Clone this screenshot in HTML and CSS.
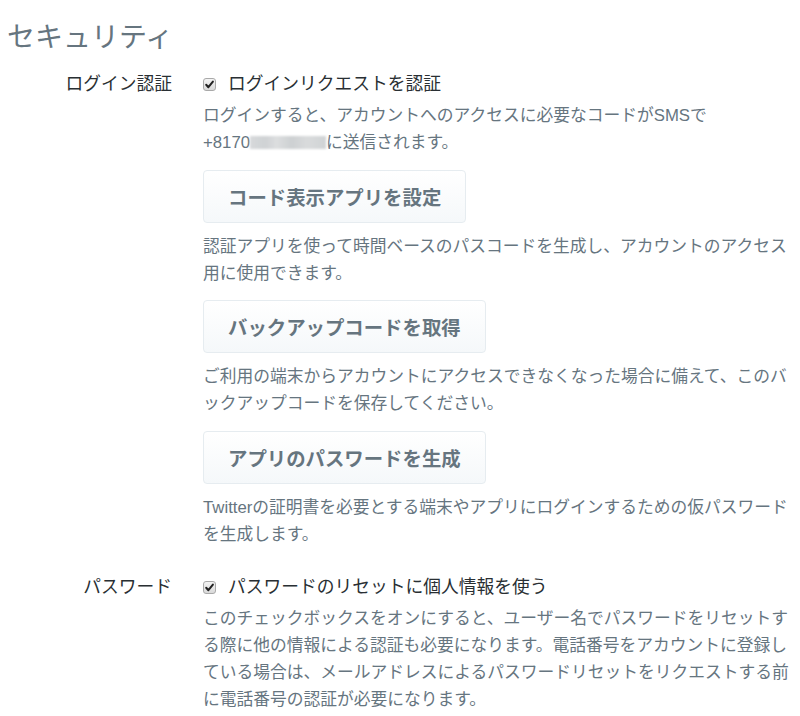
FILE: index.html
```html
<!DOCTYPE html>
<html lang="ja">
<head>
<meta charset="utf-8">
<title>セキュリティ</title>
<link rel="stylesheet" href="styles.css">
</head>
<body>
<main class="page">
  <h1 class="title">セキュリティ</h1>
  <section class="settings">
    <div class="row">
      <div class="label">ログイン認証</div>
      <div class="control">
        <label class="check">
          <span class="box"><svg viewBox="0 0 13 13" width="13" height="13"><path d="M3.2 6.8 L5.4 9.2 L9.9 3.6" fill="none" stroke="#222" stroke-width="2" stroke-linecap="round" stroke-linejoin="round"/></svg></span>
          <span class="check-text">ログインリクエストを認証</span>
        </label>
        <p class="desc first">ログインすると、アカウントへのアクセスに必要なコードがSMSで<span class="phone">+8170<span class="blur"></span></span>に送信されます。</p>
        <button class="btn">コード表示アプリを設定</button>
        <p class="desc">認証アプリを使って時間ベースのパスコードを生成し、アカウントのアクセス用に使用できます。</p>
        <button class="btn">バックアップコードを取得</button>
        <p class="desc">ご利用の端末からアカウントにアクセスできなくなった場合に備えて、このバックアップコードを保存してください。</p>
        <button class="btn">アプリのパスワードを生成</button>
        <p class="desc">Twitterの証明書を必要とする端末やアプリにログインするための仮パスワードを生成します。</p>
      </div>
    </div>
    <div class="row second">
      <div class="label">パスワード</div>
      <div class="control">
        <label class="check">
          <span class="box"><svg viewBox="0 0 13 13" width="13" height="13"><path d="M3.2 6.8 L5.4 9.2 L9.9 3.6" fill="none" stroke="#222" stroke-width="2" stroke-linecap="round" stroke-linejoin="round"/></svg></span>
          <span class="check-text">パスワードのリセットに個人情報を使う</span>
        </label>
        <p class="desc first">このチェックボックスをオンにすると、ユーザー名でパスワードをリセットする際に他の情報による認証も必要になります。電話番号をアカウントに登録している場合は、メールアドレスによるパスワードリセットをリクエストする前に電話番号の認証が必要になります。</p>
      </div>
    </div>
  </section>
</main>
</body>
</html>
```
FILE: styles.css
```css
html, body {
  margin: 0;
  padding: 0;
  background: #ffffff;
}
body {
  font-family: "Liberation Sans", "Noto Sans CJK JP", sans-serif;
  color: #292f33;
  width: 800px;
  height: 716px;
  overflow: hidden;
}
.page {
  padding-left: 7px;
}
.title {
  margin: 18px 0 0 0;
  font-size: 28px;
  line-height: 40px;
  font-weight: normal;
  color: #66757f;
}
.settings {
  display: flex;
  flex-direction: column;
  gap: 26px;
  margin-top: 13px;
}
.row {
  display: grid;
  grid-template-columns: 165px 592px;
  column-gap: 31px;
}
.label {
  text-align: right;
  font-size: 17.75px;
  line-height: 27px;
  color: #292f33;
}
.control {
  display: flex;
  flex-direction: column;
  align-items: flex-start;
}
.check {
  display: flex;
  align-items: center;
  gap: 12px;
  font-size: 17.75px;
  line-height: 27px;
  color: #292f33;
}
.box {
  display: inline-flex;
  width: 13px;
  height: 13px;
  box-sizing: border-box;
  border: 1px solid #a9a9a9;
  border-radius: 3px;
  background: linear-gradient(#f4f4f4, #d9d9d9);
  align-items: center;
  justify-content: center;
  overflow: visible;
}
.box svg {
  display: block;
  flex: none;
}
.desc {
  margin: 10px 0 0 0;
  width: 592px;
  font-size: 16.75px;
  line-height: 27px;
  color: #66757f;
}
.desc.first {
  margin-top: 4px;
}
.phone {
  white-space: nowrap;
}
.blur {
  display: inline-block;
  width: 76px;
  height: 13px;
  vertical-align: -1px;
  background: linear-gradient(90deg, #d7d9db 0%, #cfd2d4 20%, #dcdedf 35%, #cdd0d2 55%, #d9dbdc 75%, #d0d3d5 100%);
  filter: blur(1px);
}
.btn {
  margin-top: 13.5px;
  height: 53px;
  padding: 0 24px;
  font-family: "Liberation Sans", "Noto Sans CJK JP", sans-serif;
  font-size: 19.4px;
  font-weight: bold;
  color: #66757f;
  background: linear-gradient(#ffffff, #f5f8fa);
  border: 1px solid #e6ecf0;
  border-radius: 4px;
  cursor: pointer;
}
```
